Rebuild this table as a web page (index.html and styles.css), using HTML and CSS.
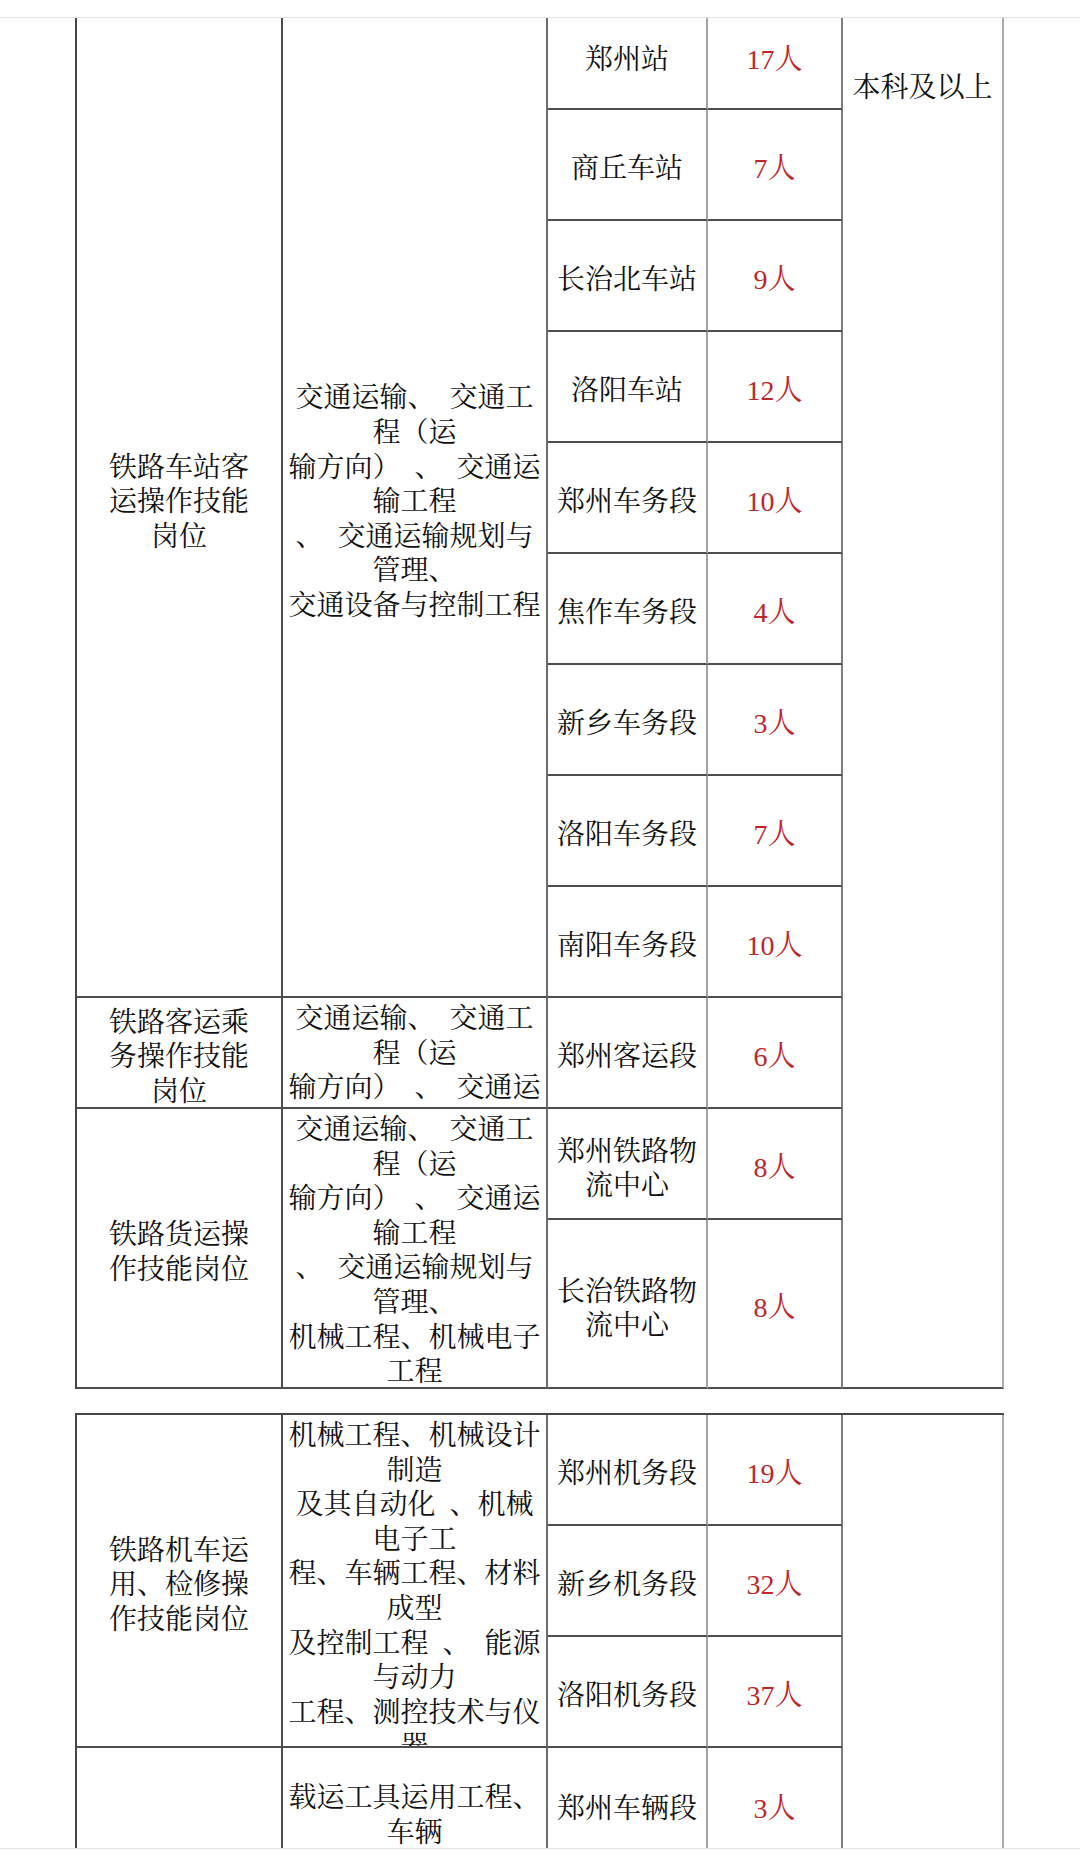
FILE: index.html
```html
<!DOCTYPE html>
<html lang="zh-CN">
<head>
<meta charset="utf-8">
<title>岗位表</title>
<link rel="stylesheet" href="styles.css">
</head>
<body>
<div class="page">
  <div class="top-strip"></div>

  <div class="sheet sheet-a">
    <div class="grid grid-a">
      <div class="cell c1 span9"><div class="ln">铁路车站客</div><div class="ln">运操作技能</div><div class="ln">岗位</div></div>
      <div class="cell c2 span9">
        <div class="ln">交通运输、&ensp;交通工</div>
        <div class="ln">程（运</div>
        <div class="ln">输方向）&ensp;、&ensp;交通运</div>
        <div class="ln">输工程</div>
        <div class="ln">、&ensp;交通运输规划与</div>
        <div class="ln">管理、</div>
        <div class="ln">交通设备与控制工程</div>
      </div>
      <div class="cell c3 first">郑州站</div>
      <div class="cell c4 first">17人</div>
      <div class="cell c5 span12 edu">本科及以上</div>

      <div class="cell c3">商丘车站</div><div class="cell c4">7人</div>
      <div class="cell c3">长治北车站</div><div class="cell c4">9人</div>
      <div class="cell c3">洛阳车站</div><div class="cell c4">12人</div>
      <div class="cell c3">郑州车务段</div><div class="cell c4">10人</div>
      <div class="cell c3">焦作车务段</div><div class="cell c4">4人</div>
      <div class="cell c3">新乡车务段</div><div class="cell c4">3人</div>
      <div class="cell c3">洛阳车务段</div><div class="cell c4">7人</div>
      <div class="cell c3">南阳车务段</div><div class="cell c4">10人</div>

      <div class="cell c1"><div class="ln">铁路客运乘</div><div class="ln">务操作技能</div><div class="ln">岗位</div></div>
      <div class="cell c2 top">
        <div class="ln">交通运输、&ensp;交通工</div>
        <div class="ln">程（运</div>
        <div class="ln">输方向）&ensp;、&ensp;交通运</div>
      </div>
      <div class="cell c3">郑州客运段</div><div class="cell c4">6人</div>

      <div class="cell c1 span2"><div class="ln">铁路货运操</div><div class="ln">作技能岗位</div></div>
      <div class="cell c2 span2 top">
        <div class="ln">交通运输、&ensp;交通工</div>
        <div class="ln">程（运</div>
        <div class="ln">输方向）&ensp;、&ensp;交通运</div>
        <div class="ln">输工程</div>
        <div class="ln">、&ensp;交通运输规划与</div>
        <div class="ln">管理、</div>
        <div class="ln">机械工程、机械电子</div>
        <div class="ln">工程</div>
      </div>
      <div class="cell c3 two"><div class="ln">郑州铁路物</div><div class="ln">流中心</div></div><div class="cell c4">8人</div>
      <div class="cell c3 two"><div class="ln">长治铁路物</div><div class="ln">流中心</div></div><div class="cell c4">8人</div>
    </div>
  </div>

  <div class="gap"></div>

  <div class="sheet sheet-b">
    <div class="grid grid-b">
      <div class="cell c1 span3"><div class="ln">铁路机车运</div><div class="ln">用、检修操</div><div class="ln">作技能岗位</div></div>
      <div class="cell c2 span3 top">
        <div class="ln">机械工程、机械设计</div>
        <div class="ln">制造</div>
        <div class="ln">及其自动化&ensp;、机械</div>
        <div class="ln">电子工</div>
        <div class="ln">程、车辆工程、材料</div>
        <div class="ln">成型</div>
        <div class="ln">及控制工程&ensp;、&ensp;能源</div>
        <div class="ln">与动力</div>
        <div class="ln">工程、测控技术与仪</div>
        <div class="ln">器</div>
      </div>
      <div class="cell c3">郑州机务段</div><div class="cell c4">19人</div>
      <div class="cell c5 span4"></div>
      <div class="cell c3">新乡机务段</div><div class="cell c4">32人</div>
      <div class="cell c3">洛阳机务段</div><div class="cell c4">37人</div>

      <div class="cell c1"></div>
      <div class="cell c2 top lower">
        <div class="ln">载运工具运用工程、</div>
        <div class="ln">车辆</div>
      </div>
      <div class="cell c3">郑州车辆段</div><div class="cell c4">3人</div>
    </div>
  </div>

  <div class="bottom-strip"></div>
</div>
</body>
</html>
```

FILE: styles.css
```css
html, body {
  margin: 0;
  padding: 0;
  background: #ffffff;
}

body {
  font-family: "Liberation Serif", "Noto Serif CJK SC", "Noto Sans CJK SC", serif;
  font-size: 28px;
  line-height: 34.6px;
  color: #111111;
}

.page {
  width: 1080px;
  height: 1875px;
  overflow: hidden;
}

.top-strip {
  height: 17px;
  border-bottom: 1px solid #e2e2e2;
}

.sheet {
  overflow: hidden;
}

.sheet-a {
  height: 1371px;
}

.gap {
  height: 24px;
}

.sheet-b {
  height: 435px;
}

.bottom-strip {
  height: 26px;
  border-top: 1px solid #e4e4e4;
}

.grid {
  display: grid;
  box-sizing: border-box;
  width: 929px;
  margin-left: 75px;
  grid-template-columns: 206px 265px 160px 135px 161px;
  border-left: 2px solid #474747;
}

.grid-a {
  margin-top: -19px;
  grid-template-rows: repeat(11, 111px) 169px;
}

.grid-b {
  border-top: 2px solid #474747;
  grid-template-rows: 111px 111px 111px 114px;
}

.cell {
  box-sizing: border-box;
  min-height: 0;
  overflow: hidden;
  display: flex;
  flex-direction: column;
  align-items: center;
  justify-content: center;
  text-align: center;
  white-space: nowrap;
  border-bottom: 2px solid #4e4e4e;
  border-right: 2px solid #4e4e4e;
  padding-top: 10px;
}

.ln {
  white-space: nowrap;
}

.c1 { grid-column: 1; }
.c2 { grid-column: 2; border-right-color: #6c6c6c; }
.c3 { grid-column: 3; border-right-color: #a2a2a2; }
.c4 { grid-column: 4; border-right-color: #7e7e7e; color: #bd262c; }
.c5 { grid-column: 5; border-right-color: #ababab; }

.span2 { grid-row: span 2; }
.span3 { grid-row: span 3; }
.span4 { grid-row: span 4; }
.span9 { grid-row: span 9; }
.span12 { grid-row: span 12; }

.top {
  justify-content: flex-start;
  padding-top: 4px;
}

.lower {
  padding-top: 33px;
}

.first {
  padding-top: 13px;
}

.two {
  line-height: 34px;
}

.edu {
  justify-content: flex-start;
  padding-top: 72px;
}
```
